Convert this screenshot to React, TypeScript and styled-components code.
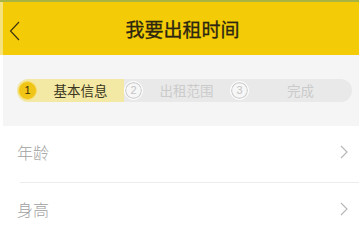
import styled, { createGlobalStyle } from 'styled-components'

const GlobalStyle = createGlobalStyle`
	html, body {
		margin: 0;
		padding: 0;
		background: #ffffff;
	}
	body {
		font-family: 'Noto Sans CJK SC', 'Noto Sans', sans-serif;
	}
`

const Page = styled.div`
	width: 359px;
	height: 240px;
	overflow: hidden;
	padding-left: 3px;
	box-sizing: border-box;
	background: #ffffff;
`

const TopStrip = styled.div`
	height: 2px;
	margin-left: -3px;
	background: #a9b443;
`

const Header = styled.div`
	height: 53px;
	margin-left: -3px;
	border-left: 3px solid #f6e27c;
	background: #f3cb06;
	display: grid;
	grid-template-columns: 40px 1fr 40px;
	align-items: center;
`

const BackButton = styled.div`
	display: flex;
	align-items: center;
	padding-left: 6px;
	padding-top: 5px;
`

const Title = styled.h1`
	margin: 0;
	text-align: center;
	font-size: 19px;
	font-weight: 400;
	color: #2b2511;
	padding-left: 3px;
	-webkit-text-stroke: 0.3px #2b2511;
`

const StepBand = styled.div`
	height: 70px;
	background: #f5f5f5;
	display: flex;
	align-items: center;
	padding: 0 4px 1px 14px;
`

const StepBar = styled.div`
	display: grid;
	grid-template-columns: 107px 106px 1fr;
	width: 335px;
	height: 23px;
	border-radius: 12px;
	background: #e9e9e9;
	overflow: hidden;
`

const Step = styled.div<{ $active?: boolean; $first?: boolean }>`
	display: flex;
	align-items: center;
	padding-left: ${({ $first }) => ($first ? '1px' : '0')};
	background: ${({ $active }) => ($active ? '#f3e8a4' : 'transparent')};
`

const StepDot = styled.div<{ $active?: boolean }>`
	width: 19px;
	height: 19px;
	box-sizing: border-box;
	flex: none;
	border-radius: 50%;
	display: flex;
	align-items: center;
	justify-content: center;
	font-family: 'Liberation Sans', sans-serif;
	font-size: 11px;
	background: ${({ $active }) => ($active ? '#f1c515' : '#f7f7f7')};
	color: ${({ $active }) => ($active ? '#3a2f08' : '#c4c4c4')};
	border: ${({ $active }) => ($active ? '1.5px solid #f5dc6a' : '1.5px solid #ffffff')};
	box-shadow: ${({ $active }) => ($active ? 'none' : 'inset 0 0 0 1.2px #cdcdcd')};
`

const StepLabel = styled.span<{ $active?: boolean }>`
	flex: 1;
	text-align: center;
	font-size: 13.5px;
	color: ${({ $active }) => ($active ? '#3a3520' : '#cbcbcb')};
`

const List = styled.div`
	background: #ffffff;
`

const Row = styled.div<{ $divider?: boolean }>`
	height: 57px;
	display: flex;
	align-items: center;
	justify-content: space-between;
	padding: 0 11px 5px 14px;
	box-sizing: border-box;
	position: relative;

	&::after {
		content: '';
		display: ${({ $divider }) => ($divider ? 'block' : 'none')};
		position: absolute;
		left: 17px;
		right: 0;
		bottom: 0;
		height: 1px;
		background: #ececec;
	}
`

const RowLabel = styled.span`
	font-size: 16px;
	font-weight: 300;
	color: #a0a0a0;
`

const Chevron = () => (
	<svg width='8' height='14' viewBox='0 0 8 14'>
		<path d='M1 1 L7 7 L1 13' fill='none' stroke='#b8b8b8' strokeWidth='1.2' />
	</svg>
)

const steps = [
	{ n: 1, label: '基本信息', active: true },
	{ n: 2, label: '出租范围', active: false },
	{ n: 3, label: '完成', active: false },
]

const App = () => {
	return (
		<>
			<GlobalStyle />
			<Page>
				<TopStrip />
				<Header>
					<BackButton>
						<svg width='11' height='20' viewBox='0 0 11 20'>
							<path d='M10 1 L1.5 10 L10 19' fill='none' stroke='#3a3010' strokeWidth='1.1' />
						</svg>
					</BackButton>
					<Title>我要出租时间</Title>
					<div />
				</Header>
				<StepBand>
					<StepBar>
						{steps.map((s, i) => (
							<Step key={s.n} $active={s.active} $first={i === 0}>
								<StepDot $active={s.active}>{s.n}</StepDot>
								<StepLabel $active={s.active}>{s.label}</StepLabel>
							</Step>
						))}
					</StepBar>
				</StepBand>
				<List>
					<Row $divider>
						<RowLabel>年龄</RowLabel>
						<Chevron />
					</Row>
					<Row>
						<RowLabel>身高</RowLabel>
						<Chevron />
					</Row>
				</List>
			</Page>
		</>
	)
}

export default App
